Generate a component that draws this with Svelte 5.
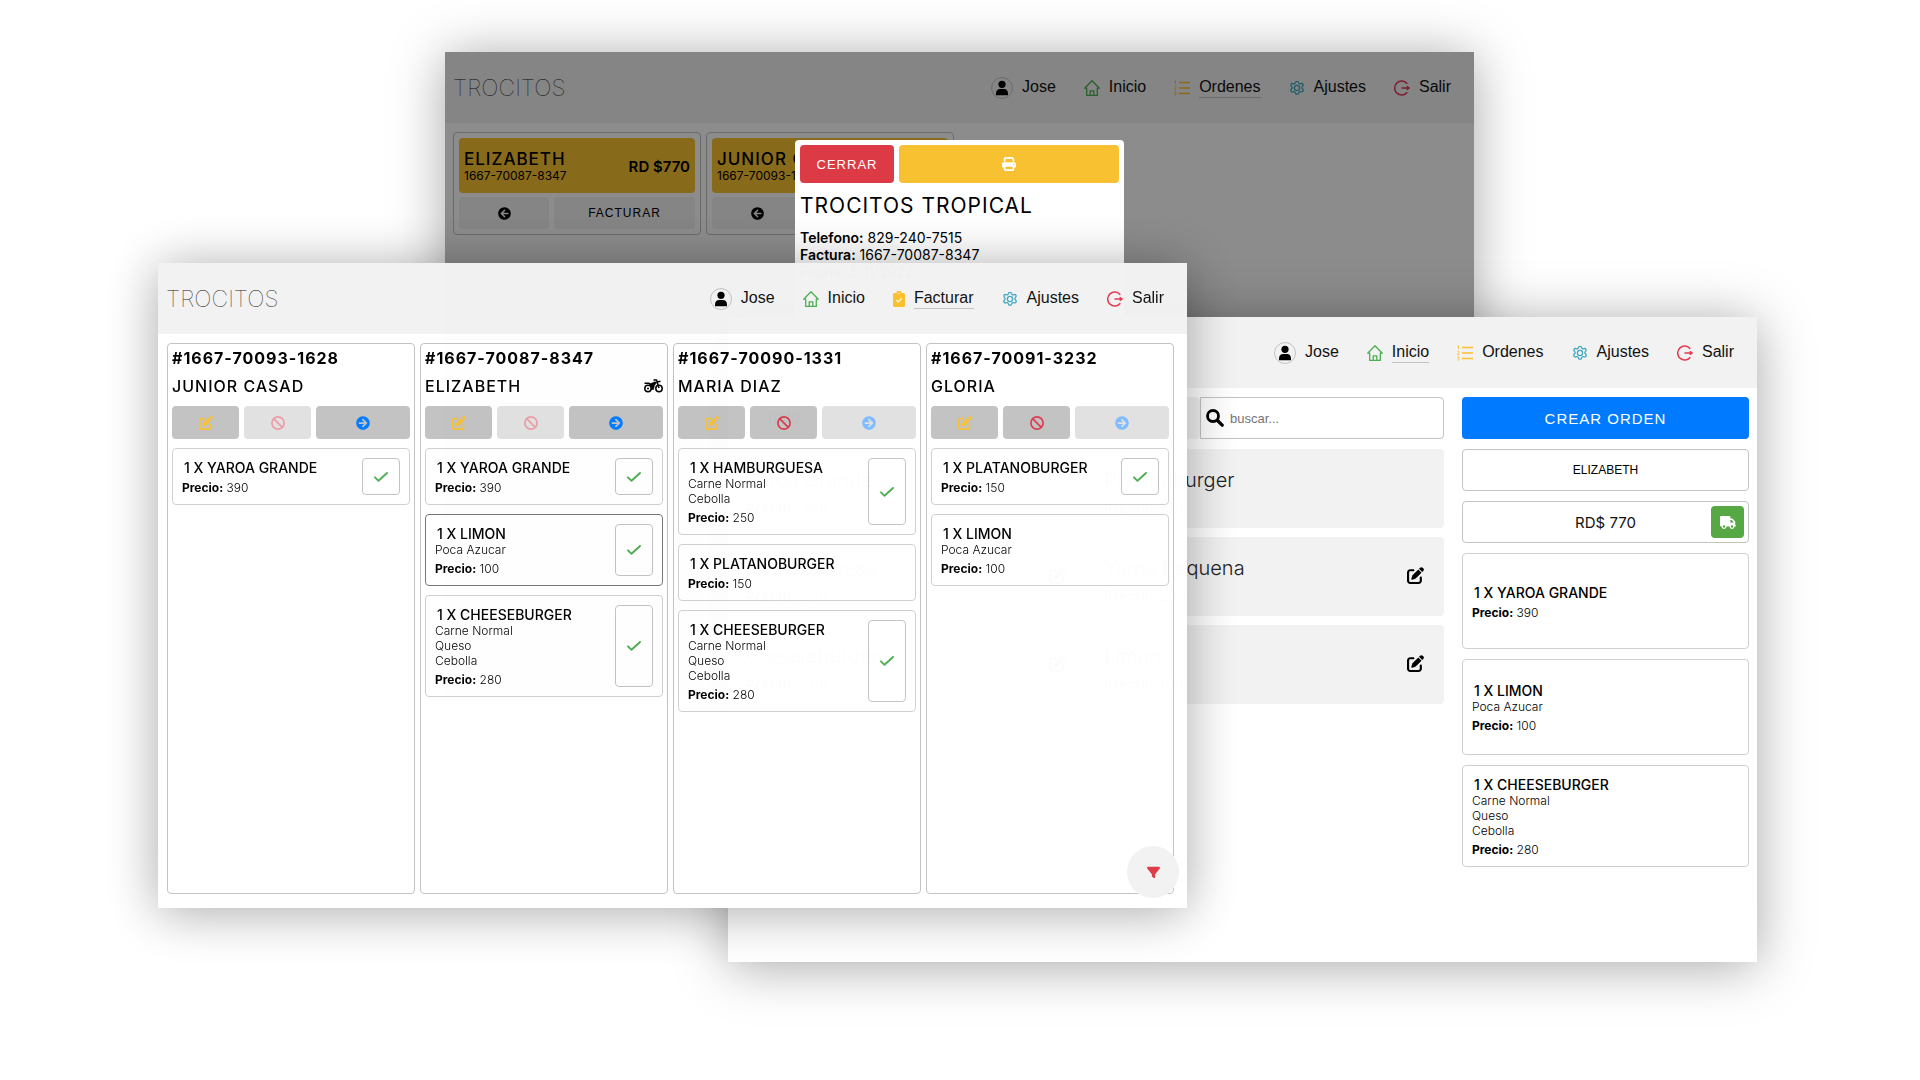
<script>
  const icons = {
    edit: 'M471.6 21.7c-21.9-21.9-57.3-21.9-79.2 0L362.3 51.7l97.9 97.9 30.1-30.1c21.9-21.9 21.9-57.3 0-79.2L471.6 21.7zm-299.2 220c-6.1 6.1-10.8 13.6-13.5 21.9l-29.6 88.8c-2.9 8.6-.6 18.1 5.8 24.6s15.9 8.7 24.6 5.8l88.8-29.6c8.2-2.7 15.7-7.4 21.9-13.5L437.7 172.3 339.7 74.3 172.4 241.7zM96 64C43 64 0 107 0 160V416c0 53 43 96 96 96H352c53 0 96-43 96-96V320c0-17.7-14.3-32-32-32s-32 14.3-32 32v96c0 17.7-14.3 32-32 32H96c-17.7 0-32-14.3-32-32V160c0-17.7 14.3-32 32-32h96c17.7 0 32-14.3 32-32s-14.3-32-32-32H96z',
    next: 'M256 8c137 0 248 111 248 248S393 504 256 504 8 393 8 256 119 8 256 8zm-28.9 143.6l75.5 72.4H120c-13.3 0-24 10.7-24 24v16c0 13.3 10.7 24 24 24h182.6l-75.5 72.4c-9.7 9.3-9.9 24.8-.4 34.3l11 10.9c9.4 9.4 24.6 9.4 33.9 0L404.3 273c9.4-9.4 9.4-24.6 0-33.9L271.6 106.3c-9.4-9.4-24.6-9.4-33.9 0l-11 10.9c-9.5 9.6-9.3 25.1.4 34.4z',
    print: 'M128 0C92.7 0 64 28.7 64 64v96h64V64H354.7L384 93.3V160h64V93.3c0-17-6.7-33.3-18.7-45.3L400 18.7C388 6.7 371.7 0 354.7 0H128zM384 352v32 64H128V384 368 352H384zm64 32h32c17.7 0 32-14.3 32-32V256c0-35.3-28.7-64-64-64H64c-35.3 0-64 28.7-64 64v96c0 17.7 14.3 32 32 32H64v64c0 35.3 28.7 64 64 64H384c35.3 0 64-28.7 64-64V384zM432 248a24 24 0 1 1 0 48 24 24 0 1 1 0-48z',
    truck: 'M48 0C21.5 0 0 21.5 0 48V368c0 26.5 21.5 48 48 48H64c0 53 43 96 96 96s96-43 96-96H384c0 53 43 96 96 96s96-43 96-96h32c17.7 0 32-14.3 32-32s-14.3-32-32-32V288 256 237.3c0-17-6.7-33.3-18.7-45.3L512 114.7c-12-12-28.3-18.7-45.3-18.7H416V48c0-26.5-21.5-48-48-48H48zM416 160h50.7L544 237.3V256H416V160zM112 416a48 48 0 1 1 96 0 48 48 0 1 1 -96 0zm368-48a48 48 0 1 1 0 96 48 48 0 1 1 0-96z',
    filter: 'M3.900 54.900C10.500 40.900 24.500 32 40 32H472c15.500 0 29.500 8.900 36.100 22.900s4.600 30.500-5.200 42.500L320 320.900V448c0 12.100-6.800 23.200-17.700 28.600s-23.800 4.300-33.500-3l-64-48c-8.100-6-12.800-15.500-12.800-25.600V320.900L9 97.300C-.7 85.400-2.800 68.800 3.900 54.900z'
  };

  const yaroa = { name: 'YAROA GRANDE', extras: [], price: 390, ready: true };
  const limon = { name: 'LIMON', extras: ['Poca Azucar'], price: 100, ready: true };
  const cheese = { name: 'CHEESEBURGER', extras: ['Carne Normal', 'Queso', 'Cebolla'], price: 280, ready: true };
  const platano = { name: 'PLATANOBURGER', extras: [], price: 150, ready: true };

  const orders = [
    { id: '1667-70093-1628', client: 'JUNIOR CASAD', canCancel: false, canAdvance: true, items: [yaroa] },
    {
      id: '1667-70087-8347', client: 'ELIZABETH', delivery: true, canCancel: false, canAdvance: true,
      items: [yaroa, { ...limon, focused: true }, cheese]
    },
    {
      id: '1667-70090-1331', client: 'MARIA DIAZ', canCancel: true, canAdvance: false,
      items: [
        { name: 'HAMBURGUESA', extras: ['Carne Normal', 'Cebolla'], price: 250, ready: true },
        { ...platano, ready: false },
        cheese
      ]
    },
    {
      id: '1667-70091-3232', client: 'GLORIA', canCancel: true, canAdvance: false,
      items: [platano, { ...limon, ready: false }]
    }
  ];

  const cart = [yaroa, limon, cheese];

  const products = [
    { name: 'Yaroa Grande', price: 390 },
    { name: 'Platanoburger', price: 150 },
    { name: 'Hamburguesa', price: 250, editable: true },
    { name: 'Yaroa Pequena', price: 200, editable: true },
    { name: 'Cheeseburger', price: 280, editable: true },
    { name: 'Limon', price: 100, editable: true }
  ];

  const bills = [
    { id: '1667-70087-8347', client: 'ELIZABETH', total: 770 },
    { id: '1667-70093-1628', client: 'JUNIOR CASAD', total: 390 }
  ];
</script>

{#snippet glyph(name, w, h, vw)}
  <svg width={w} height={h} viewBox="0 0 {vw} 512" fill="currentColor" aria-hidden="true"><path d={icons[name]} /></svg>
{/snippet}

{#snippet topbar(middle, active)}
  <header class="topbar">
    <h1 class="brand">TROCITOS</h1>
    <nav class="nav">
      <a class="link" href="#perfil">
        <span class="avatar">
          <svg width="14" height="16" viewBox="0 0 14 16" aria-hidden="true"><circle cx="7" cy="4.300" r="3.600" /><path d="M1 15.300v-2C1 10.500 3 9 5 9h4c2 0 4 1.500 4 4.300v2z" /></svg>
        </span>
        <span class="label">Jose</span>
      </a>
      <a class="link" href="#inicio">
        <svg width="16" height="16" viewBox="0 0 16 16" fill="none" stroke="#4caf50" stroke-width="1.300" stroke-linejoin="round" aria-hidden="true">
          <path d="M2.700 8.200H.7L8 .8l7.300 7.400h-2v7.200H2.700z" /><path d="M6.200 15.200v-4.400h3.600v4.400" />
        </svg>
        <span class="label" class:active={active === 'Inicio'}>Inicio</span>
      </a>
      <a class="link" href="#{middle.toLowerCase()}">
        {#if middle === 'Facturar'}
          <svg width="12" height="16" viewBox="0 0 12 16" aria-hidden="true">
            <path fill="#fbc02d" d="M1.500 2h2A2.500 2.500 0 0 1 8.500 2h2A1.500 1.500 0 0 1 12 3.500v11a1.500 1.500 0 0 1-1.500 1.500h-9A1.500 1.500 0 0 1 0 14.500v-11A1.500 1.500 0 0 1 1.500 2z" />
            <path fill="none" stroke="#fff" stroke-width="1.200" d="M3.400 9.200l1.800 1.800 3.500-3.600" /><circle cx="6" cy="2.500" r=".7" fill="#fff" />
          </svg>
        {:else}
          <svg width="16" height="16" viewBox="0 0 16 16" fill="none" stroke="#fbc02d" aria-hidden="true">
            <path stroke-width="1.300" d="M5 2.500h11M5 8h11M5 13.500h11" />
            <path stroke-width=".9" d="M.5 1.300l1-.6v3.500M.4 6.800c.4-.7 1.900-.6 1.800.2C2.100 7.800.5 8.600.4 9.600h2M.4 12h1.800l-.9 1.200c1.300 0 1.300 2-.2 1.900-.4 0-.7-.2-.8-.4" />
          </svg>
        {/if}
        <span class="label" class:active={active === middle}>{middle}</span>
      </a>
      <a class="link" href="#ajustes">
        <svg width="16" height="16" viewBox="0 0 16 16" fill="none" stroke="#42a8c0" stroke-width="1.300" aria-hidden="true">
          <circle cx="8" cy="8" r="2.600" />
          <path d="M9.600 1.700c-.4-1.500-2.800-1.500-3.200 0l-.2.500a1.300 1.300 0 0 1-1.800.8l-.5-.2c-1.500-.5-2.700 1.300-1.700 2.400l.4.500a1.500 1.500 0 0 1 0 2.300l-.4.400c-1.200 1.200 0 3.100 1.500 2.700l.7-.2a1.300 1.300 0 0 1 1.800.9l.2.500c.4 1.500 2.800 1.500 3.200 0l.2-.5a1.300 1.300 0 0 1 1.800-.9l.7.200c1.500.4 2.700-1.500 1.500-2.700l-.4-.4a1.500 1.500 0 0 1 0-2.300l.4-.5c1-1.100-.2-2.900-1.700-2.400l-.5.2a1.300 1.300 0 0 1-1.800-.8z" transform="translate(0 .8)" />
        </svg>
        <span class="label">Ajustes</span>
      </a>
      <a class="link" href="#salir">
        <svg width="16" height="16" viewBox="0 0 16 16" fill="none" stroke="#e53950" stroke-width="1.500" aria-hidden="true">
          <path d="M13.300 3.800a7 7 0 1 0 0 8.400M7.500 8h7.500M12.700 6.300L15.200 8l-2.500 1.700" />
        </svg>
        <span class="label">Salir</span>
      </a>
    </nav>
  </header>
{/snippet}

{#snippet details(item)}
  <div class="details">
    <h3 class="item-name">1 X {item.name}</h3>
    {#each item.extras as extra}<p class="extra">{extra}</p>{/each}
    <p class="price"><b>Precio:</b> {item.price}</p>
  </div>
{/snippet}

<main class="stage">
  <!-- Billing window with the receipt dialog open -->
  <section class="window billing">
    {@render topbar('Ordenes', 'Ordenes')}
    <div class="bills">
      {#each bills as bill}
        <article class="bill">
          <div class="bill-head">
            <div>
              <h2 class="bill-client">{bill.client}</h2>
              <p class="bill-id">{bill.id}</p>
            </div>
            <strong class="bill-total">RD ${bill.total}</strong>
          </div>
          <div class="bill-actions">
            <button class="soft back" type="button" aria-label="Devolver">{@render glyph('next', 13, 13, 512)}</button>
            <button class="soft" type="button">FACTURAR</button>
          </div>
        </article>
      {/each}
    </div>
    <div class="backdrop"></div>
    <div class="dialog" role="dialog" aria-label="Factura">
      <div class="dialog-actions">
        <button class="close" type="button">CERRAR</button>
        <button class="print" type="button" aria-label="Imprimir">{@render glyph('print', 14, 14, 512)}</button>
      </div>
      <h2 class="dialog-title">TROCITOS TROPICAL</h2>
      <p class="fact"><b>Telefono:</b> 829-240-7515</p>
      <p class="fact"><b>Factura:</b> 1667-70087-8347</p>
      <p class="fact"><b>Fecha:</b> 5/11/2022</p>
    </div>
  </section>

  <!-- New order window -->
  <section class="window ordering">
    {@render topbar('Ordenes', 'Inicio')}
    <div class="order-body">
      <div class="catalog">
        <div class="catalog-bar">
          <button class="category" type="button">Todo</button>
          <label class="search">
            <svg width="18" height="18" viewBox="0 0 18 18" fill="none" stroke="#000" aria-hidden="true"><circle cx="7" cy="7" r="5.500" stroke-width="2.800" /><path stroke-width="3.200" stroke-linecap="round" d="M11.500 11.500l4.700 4.700" /></svg>
            <input type="text" placeholder="buscar..." aria-label="Buscar" />
          </label>
        </div>
        <div class="products">
          {#each products as product}
            <article class="product">
              <div class="product-text">
                <h3 class="product-name">{product.name}</h3>
                <p class="product-price"><b>Precio:</b> {product.price}</p>
              </div>
              {#if product.editable}
                <button class="bare" type="button" aria-label="Editar {product.name}">{@render glyph('edit', 17, 17, 512)}</button>
              {/if}
            </article>
          {/each}
        </div>
      </div>
      <aside class="cart">
        <button class="create" type="button">CREAR ORDEN</button>
        <input class="client" type="text" value="ELIZABETH" aria-label="Cliente" />
        <div class="total">
          <span>RD$ 770</span>
          <button class="deliver" type="button" aria-label="Delivery">{@render glyph('truck', 16, 13, 640)}</button>
        </div>
        {#each cart as item}
          <article class="item tall">{@render details(item)}</article>
        {/each}
      </aside>
    </div>
  </section>

  <!-- Kitchen board window -->
  <section class="window board">
    {@render topbar('Facturar', 'Facturar')}
    <div class="columns">
      {#each orders as order}
        <section class="column">
          <h2 class="order-id">#{order.id}</h2>
          <div class="order-client">
            <h3>{order.client}</h3>
            {#if order.delivery}
              <svg width="19" height="14" viewBox="0 0 19 14" fill="none" stroke="#000" aria-label="Delivery" role="img">
                <circle cx="4" cy="9.500" r="3.200" stroke-width="1.500" /><circle cx="15" cy="9.500" r="3.200" stroke-width="1.500" />
                <circle cx="4" cy="9.500" r="1" fill="#000" stroke="none" />
                <path stroke-width="1.500" d="M.5 4.200h4.300l2 1.200M9.500 1h3l2.500 8M16.500 2.300l-3.200.6" />
                <path fill="#000" stroke-width=".6" d="M5.300 5.300l5.500-2.500 2 .8-1.600 1.800c-1 1.300-1.200 3-1.600 5H7.200C7.300 7.800 6.800 6.500 5.300 5.300z" />
              </svg>
            {/if}
          </div>
          <div class="order-actions">
            <button class="act edit" type="button" aria-label="Editar">{@render glyph('edit', 14, 14, 512)}</button>
            <button class="act cancel" type="button" aria-label="Cancelar" disabled={!order.canCancel}>
              <svg width="14" height="14" viewBox="0 0 14 14" fill="none" stroke="currentColor" stroke-width="1.700" aria-hidden="true"><circle cx="7" cy="7" r="6.100" /><path d="M2.700 2.700l8.600 8.600" /></svg>
            </button>
            <button class="act advance" type="button" aria-label="Avanzar" disabled={!order.canAdvance}>{@render glyph('next', 14, 14, 512)}</button>
          </div>
          <div class="items">
            {#each order.items as item}
              <article class="item" class:focused={item.focused}>
                {@render details(item)}
                {#if item.ready}
                  <button class="done" type="button" aria-label="Listo">
                    <svg width="14" height="10" viewBox="0 0 14 10" fill="none" stroke="#4caf50" stroke-width="1.900" stroke-linecap="round" stroke-linejoin="round" aria-hidden="true"><path d="M1 5.300l3.500 3.500L13 1" /></svg>
                  </button>
                {/if}
              </article>
            {/each}
          </div>
        </section>
      {/each}
    </div>
    <button class="filter" type="button" aria-label="Filtrar">{@render glyph('filter', 13, 13, 512)}</button>
  </section>
</main>

<style>
  :global(body) { margin: 0; background: #fff; }
  * { box-sizing: border-box; }
  h1, h2, h3, p { margin: 0; font-weight: 400; }
  svg { display: block; flex: none; }
  button, input { font-family: 'Liberation Sans', Arial, sans-serif; color: #000; }
  button { display: flex; align-items: center; justify-content: center; padding: 0; border: 0; border-radius: 4px; cursor: pointer; }

  .stage { position: relative; min-height: 100vh; overflow: hidden; font-family: Inter, 'Liberation Sans', sans-serif; color: #000; }
  .window { position: absolute; display: flex; flex-direction: column; width: 1029px; min-height: 645px; background: #fff; box-shadow: 0 4px 50px rgba(0, 0, 0, 0.35); }
  .billing { left: 445px; top: 52px; }
  .ordering { left: 728px; top: 317px; }
  .board { left: 158px; top: 263px; opacity: 0.99; }

  .topbar { display: flex; align-items: center; justify-content: space-between; height: 71px; padding: 0 23px 0 8px; background: #f2f2f2; }
  .brand { color: #222; font-size: 23px; font-weight: 100; line-height: 30px; }
  .nav { display: flex; align-items: center; gap: 28px; }
  .link { display: flex; align-items: center; gap: 9px; color: #111; text-decoration: none; font: 16px/20px 'Liberation Sans', Arial, sans-serif; }
  .label { border-bottom: 1px solid transparent; }
  .label.active { border-color: #c3c3c3; }
  .avatar { display: flex; align-items: center; justify-content: center; width: 22px; height: 22px; border: 1px solid #c3c3c3; border-radius: 50%; }

  .bills { display: flex; gap: 5px; padding: 9px 8px; }
  .bill { display: flex; flex-direction: column; gap: 4px; width: 248px; padding: 5px; border: 1px solid #c3c3c3; border-radius: 4px; }
  .bill-head { display: flex; align-items: center; justify-content: space-between; height: 55px; padding: 2px 5px 0; border-radius: 4px; background: #f8c132; }
  .bill-client { font-size: 17px; font-weight: 500; line-height: 18px; letter-spacing: 1px; }
  .bill-id { font-size: 12px; line-height: 15px; }
  .bill-total { font-size: 15px; font-weight: 600; }
  .bill-actions { display: grid; grid-template-columns: 90px 1fr; gap: 5px; }
  .soft { height: 32px; background: #f2f2f2; font-size: 12px; letter-spacing: 1px; }
  .back svg { transform: rotate(180deg); }
  .backdrop { position: absolute; inset: 0; background: rgba(0, 0, 0, 0.45); }
  .dialog { position: absolute; left: 350px; top: 88px; width: 329px; min-height: 400px; padding: 5px; border-radius: 4px; background: #fff; }
  .dialog-actions { display: grid; grid-template-columns: 94px 1fr; gap: 5px; margin-bottom: 9px; }
  .close, .print { height: 38px; color: #fff; font-size: 13px; letter-spacing: 1px; }
  .close { background: #dc3b45; }
  .print { background: #f8c132; }
  .dialog-title { margin-bottom: 9px; font-size: 21px; line-height: 28px; letter-spacing: 1px; }
  .fact { font-size: 14px; line-height: 17px; }
  .fact b { font-weight: 600; }

  .order-body { display: grid; grid-template-columns: 1fr 287px; gap: 18px; padding: 9px 8px 9px 9px; }
  .catalog { display: flex; flex-direction: column; gap: 10px; }
  .catalog-bar { display: grid; grid-template-columns: 1fr 244px; height: 42px; }
  .category { justify-content: flex-start; padding-left: 28px; background: #f2f2f2; font-size: 16px; }
  .search { display: flex; align-items: center; gap: 6px; padding: 0 5px; border: 1px solid #c3c3c3; border-radius: 0 4px 4px 0; background: #fff; }
  .search input { flex: 1; min-width: 0; padding: 0; border: 0; outline: 0; background: transparent; font-size: 13px; }
  .search input::placeholder { color: #757575; }
  .products { display: grid; grid-template-columns: 1fr 1fr; gap: 9px; }
  .product { display: flex; align-items: center; justify-content: space-between; height: 79px; padding: 0 20px 2px 9px; border-radius: 4px; background: #f2f2f2; }
  .product-text { padding-top: 6px; }
  .product-name { margin-bottom: 6px; color: #222; font-size: 20px; font-weight: 300; line-height: 28px; }
  .product-price { font-size: 13px; font-weight: 300; line-height: 16px; letter-spacing: 1px; }
  .product-price b { font-weight: 600; }
  .bare { background: none; }

  .cart { display: flex; flex-direction: column; gap: 10px; }
  .create { height: 42px; background: #007bff; color: #fff; font-size: 15px; letter-spacing: 1px; }
  .client, .total { height: 42px; border: 1px solid #c3c3c3; border-radius: 4px; background: #fff; }
  .client { width: 100%; padding: 0; text-align: center; font-size: 12px; }
  .total { position: relative; display: flex; align-items: center; justify-content: center; color: #111; font-size: 15px; }
  .deliver { position: absolute; right: 4px; top: 4px; width: 33px; height: 32px; background: #56a845; color: #fff; }

  .columns { display: grid; grid-template-columns: repeat(4, 1fr); flex: 1; gap: 5px; padding: 9px 13px 14px 9px; }
  .column { padding: 4px; border: 1px solid #c3c3c3; border-radius: 4px; }
  .order-id { font-size: 16px; font-weight: 700; line-height: 20px; letter-spacing: 1px; }
  .order-client { display: flex; align-items: center; justify-content: space-between; height: 38px; padding-bottom: 2px; }
  .order-client h3 { font-size: 16px; font-weight: 500; line-height: 32px; letter-spacing: 1px; }
  .order-actions { display: grid; grid-template-columns: 5fr 5fr 7fr; gap: 5px; }
  .act { height: 33px; background: #c3c3c3; }
  .act:disabled { opacity: 0.5; cursor: default; }
  .edit { color: #f8c132; }
  .cancel { color: #dc3b50; }
  .advance { color: #007bff; }

  .items { display: flex; flex-direction: column; gap: 9px; padding-top: 9px; }
  .item { display: flex; justify-content: space-between; padding: 9px; border: 1px solid #d0d0d0; border-radius: 4px; }
  .item.focused { border-color: #777; }
  .item.tall { align-items: center; min-height: 96px; }
  .item-name { padding: 2px 0 0 2px; font-size: 14px; font-weight: 500; line-height: 16px; }
  .extra { font-size: 12px; font-weight: 300; line-height: 15px; }
  .price { padding-top: 5px; font-size: 12px; font-weight: 300; line-height: 14px; }
  .price b { font-weight: 700; }
  .done { width: 38px; border: 1px solid #c3c3c3; background: #fff; }
  .filter { position: absolute; right: 8px; bottom: 10px; width: 52px; height: 52px; border-radius: 50%; background: #f2f2f2; color: #dc3b45; }
</style>
